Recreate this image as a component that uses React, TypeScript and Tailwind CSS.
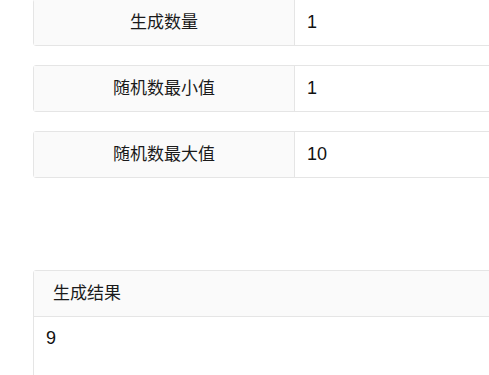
const font = { fontFamily: '"Liberation Sans", "Noto Sans CJK SC", sans-serif' };

type Field = { label: string; value: string };

const fields: Field[] = [
  { label: '生成数量', value: '1' },
  { label: '随机数最小值', value: '1' },
  { label: '随机数最大值', value: '10' },
];

function FieldRow({ label, value }: Field) {
  return (
    <div className="flex h-[47px] w-[600px] rounded-[3px] border border-[#e5e5e5] bg-white">
      <div className="flex w-[261px] shrink-0 items-center justify-center border-r border-[#e5e5e5] bg-[#fafafa] text-[17px] text-[#1a1a1a]">
        {label}
      </div>
      <div className="flex items-center pl-[12px] text-[18px] text-[#111]">{value}</div>
    </div>
  );
}

export default function App() {
  return (
    <div className="h-[375px] w-full overflow-hidden bg-white" style={font}>
      <div className="-mt-px flex flex-col gap-[19px] pl-[33px]">
        {fields.map(f => (
          <FieldRow key={f.label} label={f.label} value={f.value} />
        ))}
      </div>

      {/* result panel */}
      <div className="ml-[33px] mt-[92px] w-[600px] rounded-[3px] border border-[#e5e5e5]">
        <div className="flex h-[46px] items-center border-b border-[#e5e5e5] bg-[#fafafa] pl-[19px] text-[17px] text-[#1a1a1a]">
          生成结果
        </div>
        <div className="h-[120px] pl-[12px] pt-[9px] text-[18px] leading-[24px] text-[#111]">9</div>
      </div>
    </div>
  );
}
